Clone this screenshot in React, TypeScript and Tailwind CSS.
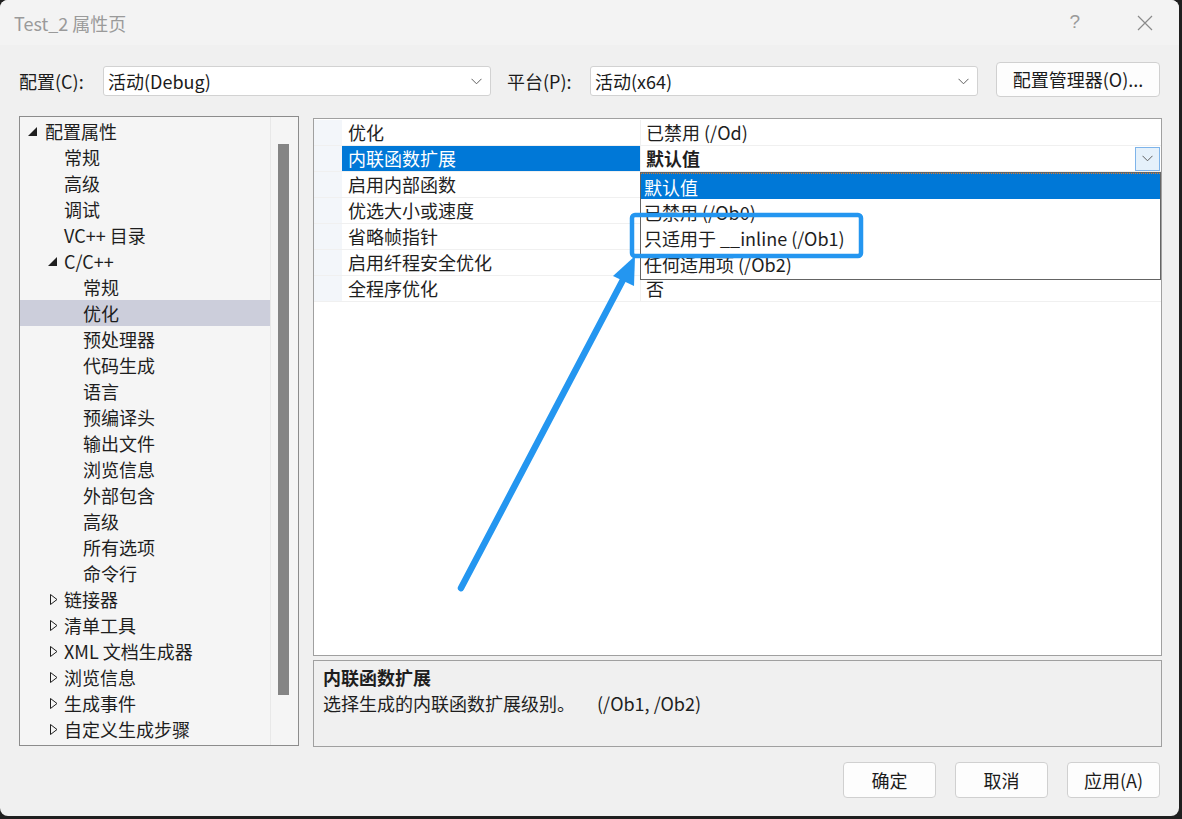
import React from 'react';

type TreeItem = { label: string; level: 0 | 1 | 2; icon?: 'open' | 'closed'; selected?: boolean };

const tree: TreeItem[] = [
  { label: '配置属性', level: 0, icon: 'open' },
  { label: '常规', level: 1 },
  { label: '高级', level: 1 },
  { label: '调试', level: 1 },
  { label: 'VC++ 目录', level: 1 },
  { label: 'C/C++', level: 1, icon: 'open' },
  { label: '常规', level: 2 },
  { label: '优化', level: 2, selected: true },
  { label: '预处理器', level: 2 },
  { label: '代码生成', level: 2 },
  { label: '语言', level: 2 },
  { label: '预编译头', level: 2 },
  { label: '输出文件', level: 2 },
  { label: '浏览信息', level: 2 },
  { label: '外部包含', level: 2 },
  { label: '高级', level: 2 },
  { label: '所有选项', level: 2 },
  { label: '命令行', level: 2 },
  { label: '链接器', level: 1, icon: 'closed' },
  { label: '清单工具', level: 1, icon: 'closed' },
  { label: 'XML 文档生成器', level: 1, icon: 'closed' },
  { label: '浏览信息', level: 1, icon: 'closed' },
  { label: '生成事件', level: 1, icon: 'closed' },
  { label: '自定义生成步骤', level: 1, icon: 'closed' },
];

const indent = ['pl-[8px]', 'pl-[27px]', 'pl-[46px]'];

// values of rows 3-6 sit under the open dropdown, so they're left blank
const props = [
  { name: '优化', value: '已禁用 (/Od)' },
  { name: '内联函数扩展', value: '默认值', selected: true },
  { name: '启用内部函数', value: '' },
  { name: '优选大小或速度', value: '' },
  { name: '省略帧指针', value: '' },
  { name: '启用纤程安全优化', value: '' },
  { name: '全程序优化', value: '否' },
];

const options = ['默认值', '已禁用 (/Ob0)', '只适用于 __inline (/Ob1)', '任何适用项 (/Ob2)'];

function Chevron({ className = '' }: { className?: string }) {
  return (
    <svg width="11" height="7" viewBox="0 0 11 7" className={className}>
      <path d="M0.5 0.8 L5.5 5.8 L10.5 0.8" fill="none" stroke="#5f5f5f" strokeWidth="1" />
    </svg>
  );
}

function TreeIcon({ icon, level }: { icon?: 'open' | 'closed'; level: number }) {
  if (icon === 'open') {
    return (
      <svg width="9" height="9" viewBox="0 0 9 9" className={level === 0 ? 'mt-[1px]' : 'ml-[1px] mt-[1px]'}>
        <polygon points="9,0 9,9 0,9" fill="#1e1e1e" />
      </svg>
    );
  }
  if (icon === 'closed') {
    return (
      <svg width="8" height="11" viewBox="0 0 8 11" className="ml-[3px]">
        <polygon points="0.5,0.5 7,5.5 0.5,10.5" fill="none" stroke="#1e1e1e" strokeWidth="1" />
      </svg>
    );
  }
  return null;
}

function Combo({ text, width }: { text: string; width: string }) {
  return (
    <div className={`${width} h-[30px] mt-[4px] bg-white border border-[#d2d2d2] rounded-[3px] flex items-center justify-between pl-[4px] pr-[8px]`}>
      <span className="text-[18px] leading-[26px] text-[#1b1b1b]">{text}</span>
      <Chevron />
    </div>
  );
}

function Button({ children, width = 'w-[93px]', h = 'h-[36px]' }: { children: React.ReactNode; width?: string; h?: string }) {
  return (
    <div className={`${width} ${h} bg-[#fdfdfd] border border-[#d0d0d0] rounded-[4px] flex items-center justify-center text-[18px] text-[#1b1b1b]`}>
      {children}
    </div>
  );
}

export default function App() {
  return (
    <div className="w-[1182px] h-[819px] bg-[#1f1f1f] overflow-hidden font-['Noto_Sans_CJK_SC',sans-serif]">
      <div className="relative w-[1179px] h-[816px] rounded-[8px] bg-[#f0f0f0] flex flex-col overflow-hidden">
        {/* Title bar */}
        <div className="h-[45px] bg-[#f3f3f3] flex items-center justify-between pl-[14px] pr-[26px]">
          <span className="text-[18px] text-[#9a9a9a] leading-[26px]">Test_2 属性页</span>
          <div className="flex items-center gap-[57px]">
            <span className="text-[19px] text-[#9a9a9a] font-['Liberation_Sans',sans-serif]">?</span>
            <svg width="16" height="16" viewBox="0 0 16 16">
              <path d="M1 1 L15 15 M15 1 L1 15" stroke="#8a8a8a" strokeWidth="1.2" />
            </svg>
          </div>
        </div>

        {/* Configuration row */}
        <div className="flex items-start mt-[17px] pl-[19px] h-[35px]">
          <span className="w-[84px] mt-[4px] text-[18px] leading-[30px] text-[#1b1b1b]">配置(C):</span>
          <Combo text="活动(Debug)" width="w-[388px]" />
          <span className="w-[83px] ml-[16px] mt-[4px] text-[18px] leading-[30px] text-[#1b1b1b]">平台(P):</span>
          <Combo text="活动(x64)" width="w-[388px]" />
          <div className="ml-[18px]">
            <Button width="w-[164px]" h="h-[35px]">配置管理器(O)...</Button>
          </div>
        </div>

        {/* Main */}
        <div className="flex mt-[19px] pl-[19px]">
          {/* Tree */}
          <div className="w-[280px] h-[630px] border border-[#8c8c8c] bg-[#f5f5f5] flex">
            <div className="w-[250px] pt-[1px]">
              {tree.map((t, i) => (
                <div
                  key={i}
                  className={`h-[26px] flex items-center ${indent[t.level]} ${t.selected ? 'bg-[#cccedb]' : ''}`}
                >
                  <div className="w-[17px] flex items-center">
                    <TreeIcon icon={t.icon} level={t.level} />
                  </div>
                  <span className="text-[18px] leading-[26px] text-[#1e1e1e] whitespace-pre">{t.label}</span>
                </div>
              ))}
            </div>
            <div className="w-[1px] bg-[#e8e8e8]" />
            <div className="flex-1 pt-[27px] pl-[7px]">
              <div className="w-[11px] h-[551px] bg-[#858585]" />
            </div>
          </div>

          {/* Right column */}
          <div className="ml-[14px] mt-[2px] flex flex-col">
            <div className="relative w-[849px] h-[538px] border border-[#a0a0a0] bg-white pt-[1px]">
              {props.map((p, i) => (
                <div key={i} className="flex h-[26px] border-b border-[#f0f0f0]">
                  <div className="w-[28px] bg-[#f3f6fa]" />
                  <div
                    className={`w-[298px] pl-[6px] text-[18px] leading-[25px] ${
                      p.selected ? 'bg-[#0078d7] text-white' : 'text-[#1e1e1e]'
                    }`}
                  >
                    {p.name}
                  </div>
                  <div className="flex-1 border-l border-[#f0f0f0] pl-[5px] flex items-center justify-between">
                    <span className={`text-[18px] leading-[25px] text-[#1e1e1e] ${p.selected ? 'font-bold' : ''}`}>
                      {p.value}
                    </span>
                    {p.selected && (
                      <div className="w-[25px] h-[24px] mr-[1px] border border-[#7eb4ea] bg-[#e5f1fb] flex items-center justify-center">
                        <Chevron />
                      </div>
                    )}
                  </div>
                </div>
              ))}

              {/* Dropdown list */}
              <div className="absolute left-[326px] top-[53px] w-[521px] h-[108px] bg-white border border-[#646464]">
                {options.map((o, i) => (
                  <div
                    key={i}
                    className={`h-[26px] pl-[3px] text-[18px] leading-[26px] ${
                      i === 0 ? 'bg-[#0078d7] text-white border-t border-dotted border-[#e07a2a]' : 'text-[#1e1e1e]'
                    }`}
                  >
                    {o}
                  </div>
                ))}
              </div>
            </div>

            {/* Description */}
            <div className="mt-[4px] w-[849px] h-[87px] border border-[#a0a0a0] bg-[#f0f0f0] pl-[9px] pt-[3px]">
              <div className="text-[18px] leading-[26px] font-bold text-[#1e1e1e]">内联函数扩展</div>
              <div className="text-[18px] leading-[26px] text-[#1e1e1e] whitespace-pre">
                选择生成的内联函数扩展级别。<span className="ml-[22px]">(/Ob1, /Ob2)</span>
              </div>
            </div>
          </div>
        </div>

        {/* Buttons */}
        <div className="flex justify-end gap-[19px] pr-[19px] mt-[15px]">
          <Button>确定</Button>
          <Button>取消</Button>
          <Button>应用(A)</Button>
        </div>

        {/* Annotation */}
        <svg className="absolute left-0 top-0 pointer-events-none" width="1179" height="816" viewBox="0 0 1179 816">
          <rect x="632" y="215" width="229" height="41" rx="3" fill="none" stroke="#2496f0" strokeWidth="4.5" />
          <line x1="461" y1="588" x2="625" y2="276" stroke="#2496f0" strokeWidth="6.5" strokeLinecap="round" />
          <polygon points="635,256 613,276 634,286" fill="#2496f0" />
        </svg>
      </div>
    </div>
  );
}
